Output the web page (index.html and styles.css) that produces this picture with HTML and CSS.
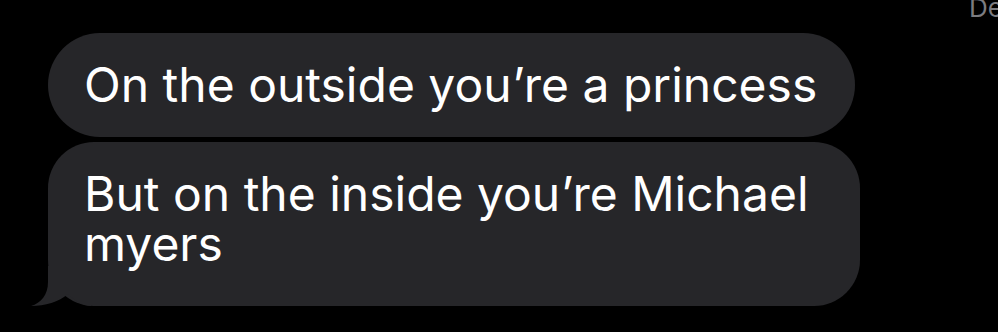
FILE: index.html
```html
<!DOCTYPE html>
<html>
<head>
<meta charset="utf-8">
<link rel="stylesheet" href="styles.css">
</head>
<body>
<div class="page">
  <div class="status">Delivered</div>
  <div class="thread">
    <div class="bubble single">On the outside you’re a princess</div>
    <div class="bubble last">But on the inside you’re Michael myers
      <svg class="tail" width="60" height="40" viewBox="0 0 60 40">
        <path d="M17 0 L17 16 C17 29 10 37 0 40 C14 40 28 36 37 28 C44 35 52 40 60 40 L60 0 Z" fill="#262629"/>
      </svg>
    </div>
  </div>
</div>
</body>
</html>
```

FILE: styles.css
```css
html, body {
  margin: 0;
  padding: 0;
  background: #000;
  overflow: hidden;
}
.page {
  display: flex;
  flex-direction: column;
  width: 998px;
  height: 332px;
  overflow: hidden;
  font-family: "Inter", "Liberation Sans", sans-serif;
}
.status {
  height: 0;
  margin-top: -5px;
  padding-left: 969px;
  white-space: nowrap;
  font-size: 26px;
  line-height: 26px;
  color: #7c7c80;
}
.thread {
  display: flex;
  flex-direction: column;
  align-items: flex-start;
  gap: 5px;
  padding-top: 38px;
  padding-left: 48px;
}
.bubble {
  position: relative;
  background: #262629;
  color: #fff;
  font-size: 48px;
  line-height: 50px;
  box-sizing: border-box;
}
.single {
  padding: 27px 38px 27px 36px;
  border-radius: 52px;
}
.last {
  width: 812px;
  padding: 27px 40px 37px 36px;
  border-radius: 46px;
}
.tail {
  position: absolute;
  left: -17px;
  bottom: 0;
  display: block;
}
```
